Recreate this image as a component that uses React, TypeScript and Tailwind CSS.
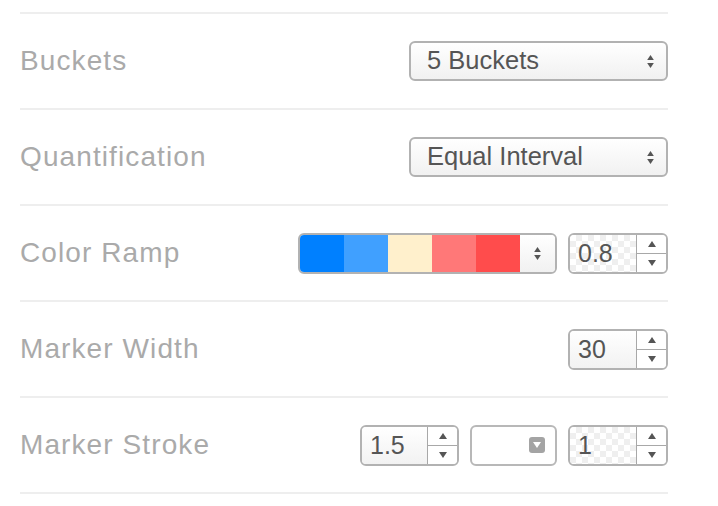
import React from "react";

const font = { fontFamily: '"Liberation Sans", Arial, sans-serif' };

function UpDown({ size = 7 }: { size?: number }) {
  return (
    <div className="flex flex-col items-center gap-[3px]">
      <svg width={size} height={size - 2} viewBox="0 0 8 6">
        <path d="M4 0L8 6H0z" fill="#555" />
      </svg>
      <svg width={size} height={size - 2} viewBox="0 0 8 6">
        <path d="M0 0H8L4 6z" fill="#555" />
      </svg>
    </div>
  );
}

function Select({ value }: { value: string }) {
  return (
    <div className="flex h-[40px] w-[259px] items-center justify-between rounded-[6px] border-2 border-[#b2b2b2] bg-gradient-to-b from-white to-[#f1f1f1] pl-4 pr-[12px]">
      <span className="text-[25.5px] leading-none text-[#555]">{value}</span>
      <UpDown />
    </div>
  );
}

function Spinner() {
  return (
    <div className="flex w-[30px] flex-col border-l border-[#a8a8a8] bg-white">
      <div className="flex flex-1 items-center justify-center border-b border-[#a8a8a8]">
        <svg width="8" height="6" viewBox="0 0 8 6">
          <path d="M4 0L8 6H0z" fill="#555" />
        </svg>
      </div>
      <div className="flex flex-1 items-center justify-center">
        <svg width="8" height="6" viewBox="0 0 8 6">
          <path d="M0 0H8L4 6z" fill="#555" />
        </svg>
      </div>
    </div>
  );
}

function NumberBox({ value, checker, narrow }: { value: string; checker?: boolean; narrow?: boolean }) {
  return (
    <div
      className={
        narrow
          ? "flex h-[41px] w-[99px] overflow-hidden rounded-[6px] border-2 border-[#b2b2b2]"
          : "flex h-[41px] w-[100px] overflow-hidden rounded-[6px] border-2 border-[#b2b2b2]"
      }
    >
      <div
        className={
          checker
            ? "flex flex-1 items-center bg-[repeating-conic-gradient(#efefef_0_25%,#ffffff_0_50%)] bg-[length:12px_12px] pl-2"
            : "flex flex-1 items-center bg-gradient-to-b from-white to-[#f2f2f2] pl-2"
        }
      >
        <span className="text-[25px] leading-none text-[#555]">{value}</span>
      </div>
      <Spinner />
    </div>
  );
}

function Row({ label, children }: { label: string; children: React.ReactNode }) {
  return (
    <div className="flex h-[96px] items-center justify-between border-t-2 border-[#eeeeee]">
      <span className="text-[28px] leading-none tracking-[1.1px] text-[#aaaaaa]">{label}</span>
      <div className="flex items-center gap-[11px]">{children}</div>
    </div>
  );
}

export default function App() {
  const ramp = ["#0080ff", "#40a0ff", "#fff0cc", "#ff7878", "#ff4c4c"];
  return (
    <div className="h-[506px] w-[718px] bg-white pl-5 pr-[50px] pt-3" style={font}>
      <Row label="Buckets">
        <Select value="5 Buckets" />
      </Row>
      <Row label="Quantification">
        <Select value="Equal Interval" />
      </Row>
      <Row label="Color Ramp">
        <div className="flex h-[41px] w-[259px] overflow-hidden rounded-[6px] border-2 border-[#b2b2b2]">
          {ramp.map((c) => (
            <div key={c} className="w-[44px]" style={{ background: c }} />
          ))}
          <div className="flex flex-1 items-center justify-center bg-gradient-to-b from-white to-[#f1f1f1]">
            <UpDown />
          </div>
        </div>
        <NumberBox value="0.8" checker />
      </Row>
      <Row label="Marker Width">
        <NumberBox value="30" />
      </Row>
      <Row label="Marker Stroke">
        <NumberBox value="1.5" narrow />
        <div className="flex h-[41px] w-[87px] items-center justify-end rounded-[6px] border-2 border-[#b8b8b8] bg-white pr-[10px]">
          <div className="flex h-[16px] w-[16px] items-center justify-center rounded-[3px] bg-[#a4a4a4]">
            <svg width="8" height="6" viewBox="0 0 8 6">
              <path d="M0 0H8L4 6z" fill="#fff" />
            </svg>
          </div>
        </div>
        <NumberBox value="1" checker />
      </Row>
      <div className="border-t-2 border-[#eeeeee]" />
    </div>
  );
}
